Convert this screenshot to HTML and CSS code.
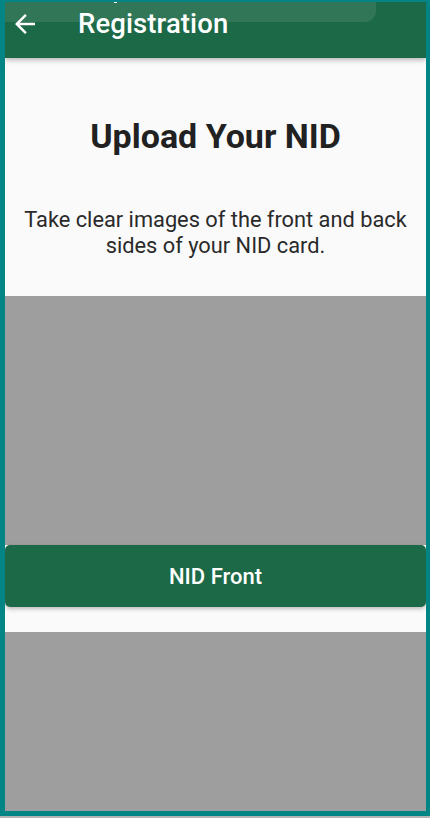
FILE: index.html
```html
<!DOCTYPE html>
<html lang="en">
<head>
<meta charset="utf-8">
<title>Registration</title>
<link rel="stylesheet" href="styles.css">
</head>
<body>
<div class="frame">
  <header class="appbar">
    <div class="appbar-ghost"><span class="ghost-mark"></span></div>
    <div class="appbar-row">
      <svg class="back" viewBox="0 0 24 24" width="30" height="30" aria-hidden="true">
        <path d="M20 11H7.83l5.59-5.59L12 4l-8 8 8 8 1.41-1.41L7.83 13H20v-2z" fill="#ffffff"/>
      </svg>
      <span class="appbar-title">Registration</span>
    </div>
  </header>
  <section class="intro">
    <h1 class="intro-title">Upload Your NID</h1>
    <p class="intro-text">Take clear images of the front and back sides of your NID card.</p>
  </section>
  <div class="photo photo-front"></div>
  <button class="nid-button" type="button">NID Front</button>
  <div class="spacer"></div>
  <div class="photo photo-back"></div>
</div>
</body>
</html>
```

FILE: styles.css
```css
html, body {
  margin: 0;
  padding: 0;
  background: #b4b4b4;
}
body {
  width: 430px;
  height: 818px;
  font-family: Roboto, "Noto Sans", "Liberation Sans", sans-serif;
}
.frame {
  box-sizing: border-box;
  width: 430px;
  height: 816px;
  border-style: solid;
  border-color: #038585;
  border-width: 2px 4px 5px 5px;
  background: #fafafa;
  display: flex;
  flex-direction: column;
  overflow: hidden;
}
.appbar {
  position: relative;
  flex: 0 0 56px;
  box-sizing: border-box;
  background: #1c6947;
  padding: 9px 0 0 5px;
  box-shadow: 0 2px 5px rgba(0, 0, 0, 0.28);
  z-index: 2;
}
.appbar-ghost {
  position: absolute;
  left: 0;
  top: -2px;
  width: 371px;
  height: 22px;
  background: rgba(255, 255, 255, 0.09);
  border-radius: 0 0 11px 0;
}
.ghost-mark {
  position: absolute;
  left: 109px;
  top: 0;
  width: 3px;
  height: 3px;
  background: #ffffff;
}
.appbar-row {
  position: relative;
  height: 26px;
  display: flex;
  align-items: center;
  gap: 38px;
}
.back {
  display: block;
  flex: 0 0 auto;
}
.appbar-title {
  color: #ffffff;
  font-size: 27.5px;
  font-weight: 500;
  line-height: 26px;
  letter-spacing: 0.1px;
}
.intro {
  flex: 0 0 238px;
  box-sizing: border-box;
  padding: 59px 10px 0;
  text-align: center;
  color: #212121;
}
.intro-title {
  margin: 0;
  font-size: 34px;
  line-height: 38px;
  font-weight: 700;
}
.intro-text {
  margin: 52px 0 0;
  font-size: 21.8px;
  line-height: 26px;
  font-weight: 400;
  color: #2a2a2a;
}
.photo {
  background: #9e9e9e;
}
.photo-front {
  flex: 0 0 249px;
}
.nid-button {
  flex: 0 0 62px;
  margin: 0;
  border: none;
  border-radius: 5px;
  background: #1c6947;
  color: #ffffff;
  font-family: Roboto, "Noto Sans", "Liberation Sans", sans-serif;
  font-size: 22px;
  font-weight: 500;
  box-shadow: 0 2px 4px rgba(0, 0, 0, 0.25);
  position: relative;
  z-index: 1;
}
.spacer {
  flex: 0 0 25px;
  background: #fafafa;
}
.photo-back {
  flex: 1 1 auto;
}
```
